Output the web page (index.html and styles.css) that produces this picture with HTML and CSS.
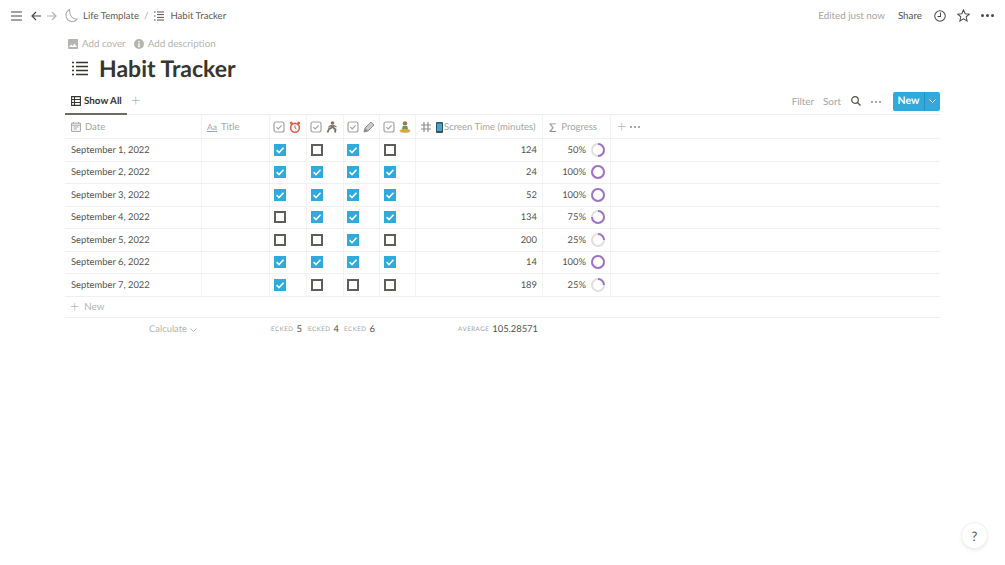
FILE: index.html
```html
<!DOCTYPE html>
<html>
<head>
<meta charset="utf-8">
<title>Habit Tracker</title>
<link rel="stylesheet" href="styles.css">
</head>
<body>
<svg class="defs" width="0" height="0">
	<symbol id="tick" viewBox="0 0 12 12"><path d="M2.6 6.2 5 8.5 9.5 3.8" fill="none" stroke="#fff" stroke-width="1.6"/></symbol>
	<symbol id="checkhead" viewBox="0 0 12 12"><rect x="1" y="1" width="10" height="10" rx="2" fill="none" stroke="#a5a4a1" stroke-width="1.2"/><path d="M3.4 6.1 5.3 7.9 8.6 4.4" fill="none" stroke="#a5a4a1" stroke-width="1.2"/></symbol>
</svg>

<div class="topbar">
	<svg class="ico menu" width="11" height="10" viewBox="0 0 11 10"><path d="M0 1h11M0 5h11M0 9h11" stroke="#4a4945" stroke-width="1.2"/></svg>
	<svg class="ico back" width="10" height="10" viewBox="0 0 10 10"><path d="M10 5H1M5 1 1 5l4 4" fill="none" stroke="#4a4945" stroke-width="1.2"/></svg>
	<svg class="ico forward" width="10" height="10" viewBox="0 0 10 10"><path d="M0 5h9M5 1l4 4-4 4" fill="none" stroke="#b5b4b1" stroke-width="1.2"/></svg>
	<svg class="ico moon" width="13" height="15" viewBox="0 0 14 15"><path d="M5 1C2.400 2.500 1 4.700 1 7.300 1 11 3.900 14 7.500 14c2.400 0 4.300-.8 5.500-2.500-4.800.4-8.400-4-8-10.500Z" fill="none" stroke="#a9a8a5" stroke-width="1.100"/></svg>
	<span class="crumb">Life Template</span>
	<span class="slash">/</span>
	<svg class="ico crumbicon" width="10" height="10" viewBox="0 0 10 10"><path d="M0 1h1.500M0 5h1.500M0 9h1.500M3 1h7M3 3.600h7M3 6.400h7M3 9h7" stroke="#55534e" stroke-width="1"/></svg>
	<span class="crumb">Habit Tracker</span>
	<span class="edited">Edited just now</span>
	<span class="share">Share</span>
	<svg class="ico clock" width="12" height="12" viewBox="0 0 13 13"><circle cx="6.500" cy="6.500" r="5.700" fill="none" stroke="#4a4945" stroke-width="1.100"/><path d="M7 2.800V7H3.800" fill="none" stroke="#4a4945" stroke-width="1.100"/></svg>
	<svg class="ico star" width="13" height="13" viewBox="0 0 14 14"><path d="M7 1 8.800 5.100l4.400.4-3.300 2.900 1 4.400L7 10.500l-3.900 2.300 1-4.400L.8 5.500l4.400-.4Z" fill="none" stroke="#4a4945" stroke-width="1.100"/></svg>
	<span class="dots dark"><i></i><i></i><i></i></span>
</div>

<div class="page">
	<div class="addrow">
		<span class="addbtn"><svg width="10" height="10" viewBox="0 0 10 10"><path d="M0 1a1 1 0 0 1 1-1h8a1 1 0 0 1 1 1v8a1 1 0 0 1-1 1H1a1 1 0 0 1-1-1Zm1 7h8L6.500 4.500 4.700 7 3.200 5.500Z" fill="#b5b4b1" fill-rule="evenodd"/></svg>Add cover</span>
		<span class="addbtn"><svg width="10" height="10" viewBox="0 0 10 10"><path d="M5 0a5 5 0 1 1 0 10A5 5 0 0 1 5 0ZM4.300 4.200v4h1.400v-4Zm0-2.300v1.400h1.400V1.900Z" fill="#b5b4b1" fill-rule="evenodd"/></svg>Add description</span>
	</div>
	<div class="titlerow">
		<svg width="16" height="15" viewBox="0 0 16 15"><path d="M0 1.500h2M0 5.500h2M0 9.500h2M0 13.500h2M4 1.500h12M4 5.500h12M4 9.500h12M4 13.500h12" stroke="#37352f" stroke-width="1.600"/></svg>
		<h1>Habit Tracker</h1>
	</div>

	<div class="viewbar">
		<div class="tab">
			<svg width="10" height="10" viewBox="0 0 10 10"><path d="M.6.600h8.800v8.800H.6ZM.6 3.500h8.800M.6 6.500h8.800M3.500.6v8.800" fill="none" stroke="#37352f" stroke-width="1.100"/></svg>
			Show All
		</div>
		<span class="plus">+</span>
		<div class="tools">
			<span>Filter</span>
			<span>Sort</span>
			<svg width="10" height="10" viewBox="0 0 10 10"><circle cx="4" cy="4" r="3.300" fill="none" stroke="#55534e" stroke-width="1.200"/><path d="m6.500 6.500 3 3" stroke="#55534e" stroke-width="1.300"/></svg>
			<span class="dots"><i></i><i></i><i></i></span>
			<div class="newbtn"><b>New</b><em><svg width="7" height="4" viewBox="0 0 7 4"><path d="m.5.500 3 3 3-3" fill="none" stroke="#fff" stroke-width="1"/></svg></em></div>
		</div>
	</div>

	<div class="row head">
		<div class="cell"><svg width="10" height="10" viewBox="0 0 10 10"><path d="M.6 1.200h8.800v8.200H.6ZM.6 3.200h8.800M2.500 5h5M2.500 7h3.500M2.500 0v1.200M7.500 0v1.200" fill="none" stroke="#a5a4a1" stroke-width="1"/></svg>Date</div>
		<div class="cell"><span class="aa">Aa</span>Title</div>
		<div class="cell"><svg class="chk" width="12" height="12"><use href="#checkhead"/></svg>
			<svg class="emoji" width="12" height="12" viewBox="0 0 12 12"><circle cx="6" cy="6.800" r="4.400" fill="#fff" stroke="#e0604c" stroke-width="1.600"/><circle cx="2.300" cy="2" r="1.500" fill="#e0604c"/><circle cx="9.700" cy="2" r="1.500" fill="#e0604c"/><path d="M6 4.500v2.500l1.500 1" fill="none" stroke="#555" stroke-width=".8"/></svg></div>
		<div class="cell"><svg class="chk" width="12" height="12"><use href="#checkhead"/></svg>
			<svg class="emoji" width="12" height="12" viewBox="0 0 12 12"><circle cx="6.500" cy="2" r="1.800" fill="#a26a45"/><path d="M4.200 4h3.800l.5 3.200H4.700Z" fill="#6c7a9c"/><path d="M5.500 7 3 8 1.500 11.500M7.500 7l2 1.500-.5 3" fill="none" stroke="#7a6a62" stroke-width="1.800"/><path d="M4.500 4.500 2.500 6.500M8 4.500 10.500 6" stroke="#a26a45" stroke-width="1.200"/></svg></div>
		<div class="cell"><svg class="chk" width="12" height="12"><use href="#checkhead"/></svg>
			<svg class="emoji" width="12" height="12" viewBox="0 0 12 12"><path d="M1 11 2 7 8 1l3 3-6 6Z" fill="#c9c9c7" stroke="#7d7d7b" stroke-width=".8"/><path d="m1 11 1-4 3 3Z" fill="#8b8b89"/></svg></div>
		<div class="cell"><svg class="chk" width="12" height="12"><use href="#checkhead"/></svg>
			<svg class="emoji" width="12" height="12" viewBox="0 0 12 12"><circle cx="6" cy="2.400" r="2.200" fill="#a8763f"/><path d="M3.800 5h4.400l1 3.500H2.800Z" fill="#5c9a76"/><ellipse cx="6" cy="9.800" rx="5.500" ry="2" fill="#d9a93d"/></svg></div>
		<div class="cell">
			<svg class="hash" width="10" height="10" viewBox="0 0 10 10"><path d="M3 0v10M7 0v10M0 3h10M0 7h10" stroke="#8f8e8b" stroke-width="1.200"/></svg>
			<svg class="phone" width="7" height="11" viewBox="0 0 7 11"><rect width="7" height="11" rx="1" fill="#3d4f58"/><rect x="1" y="1.500" width="5" height="7.500" fill="#3aa8d8"/></svg>Screen Time (minutes)</div>
		<div class="cell"><span class="sigma">Σ</span>Progress</div>
		<div class="cell last"><span class="plus">+</span><span class="dots"><i></i><i></i><i></i></span></div>
	</div>

	<div class="row"><div class="cell">September 1, 2022</div><div class="cell"></div>
		<div class="cell box"><span class="cb on"><svg width="12" height="12"><use href="#tick"/></svg></span></div>
		<div class="cell box"><span class="cb"></span></div>
		<div class="cell box"><span class="cb on"><svg width="12" height="12"><use href="#tick"/></svg></span></div>
		<div class="cell box"><span class="cb"></span></div>
		<div class="cell num">124</div>
		<div class="cell prog">50%<svg class="ring" width="14" height="14" viewBox="0 0 14 14"><circle class="track" cx="7" cy="7" r="6"/><circle class="arc" cx="7" cy="7" r="6" pathLength="100" stroke-dasharray="50 100"/></svg></div>
		<div class="cell last"></div></div>

	<div class="row"><div class="cell">September 2, 2022</div><div class="cell"></div>
		<div class="cell box"><span class="cb on"><svg width="12" height="12"><use href="#tick"/></svg></span></div>
		<div class="cell box"><span class="cb on"><svg width="12" height="12"><use href="#tick"/></svg></span></div>
		<div class="cell box"><span class="cb on"><svg width="12" height="12"><use href="#tick"/></svg></span></div>
		<div class="cell box"><span class="cb on"><svg width="12" height="12"><use href="#tick"/></svg></span></div>
		<div class="cell num">24</div>
		<div class="cell prog">100%<svg class="ring" width="14" height="14" viewBox="0 0 14 14"><circle class="track" cx="7" cy="7" r="6"/><circle class="arc" cx="7" cy="7" r="6" pathLength="100" stroke-dasharray="100 100"/></svg></div>
		<div class="cell last"></div></div>

	<div class="row"><div class="cell">September 3, 2022</div><div class="cell"></div>
		<div class="cell box"><span class="cb on"><svg width="12" height="12"><use href="#tick"/></svg></span></div>
		<div class="cell box"><span class="cb on"><svg width="12" height="12"><use href="#tick"/></svg></span></div>
		<div class="cell box"><span class="cb on"><svg width="12" height="12"><use href="#tick"/></svg></span></div>
		<div class="cell box"><span class="cb on"><svg width="12" height="12"><use href="#tick"/></svg></span></div>
		<div class="cell num">52</div>
		<div class="cell prog">100%<svg class="ring" width="14" height="14" viewBox="0 0 14 14"><circle class="track" cx="7" cy="7" r="6"/><circle class="arc" cx="7" cy="7" r="6" pathLength="100" stroke-dasharray="100 100"/></svg></div>
		<div class="cell last"></div></div>

	<div class="row"><div class="cell">September 4, 2022</div><div class="cell"></div>
		<div class="cell box"><span class="cb"></span></div>
		<div class="cell box"><span class="cb on"><svg width="12" height="12"><use href="#tick"/></svg></span></div>
		<div class="cell box"><span class="cb on"><svg width="12" height="12"><use href="#tick"/></svg></span></div>
		<div class="cell box"><span class="cb on"><svg width="12" height="12"><use href="#tick"/></svg></span></div>
		<div class="cell num">134</div>
		<div class="cell prog">75%<svg class="ring" width="14" height="14" viewBox="0 0 14 14"><circle class="track" cx="7" cy="7" r="6"/><circle class="arc" cx="7" cy="7" r="6" pathLength="100" stroke-dasharray="75 100"/></svg></div>
		<div class="cell last"></div></div>

	<div class="row"><div class="cell">September 5, 2022</div><div class="cell"></div>
		<div class="cell box"><span class="cb"></span></div>
		<div class="cell box"><span class="cb"></span></div>
		<div class="cell box"><span class="cb on"><svg width="12" height="12"><use href="#tick"/></svg></span></div>
		<div class="cell box"><span class="cb"></span></div>
		<div class="cell num">200</div>
		<div class="cell prog">25%<svg class="ring" width="14" height="14" viewBox="0 0 14 14"><circle class="track" cx="7" cy="7" r="6"/><circle class="arc" cx="7" cy="7" r="6" pathLength="100" stroke-dasharray="25 100"/></svg></div>
		<div class="cell last"></div></div>

	<div class="row"><div class="cell">September 6, 2022</div><div class="cell"></div>
		<div class="cell box"><span class="cb on"><svg width="12" height="12"><use href="#tick"/></svg></span></div>
		<div class="cell box"><span class="cb on"><svg width="12" height="12"><use href="#tick"/></svg></span></div>
		<div class="cell box"><span class="cb on"><svg width="12" height="12"><use href="#tick"/></svg></span></div>
		<div class="cell box"><span class="cb on"><svg width="12" height="12"><use href="#tick"/></svg></span></div>
		<div class="cell num">14</div>
		<div class="cell prog">100%<svg class="ring" width="14" height="14" viewBox="0 0 14 14"><circle class="track" cx="7" cy="7" r="6"/><circle class="arc" cx="7" cy="7" r="6" pathLength="100" stroke-dasharray="100 100"/></svg></div>
		<div class="cell last"></div></div>

	<div class="row"><div class="cell">September 7, 2022</div><div class="cell"></div>
		<div class="cell box"><span class="cb on"><svg width="12" height="12"><use href="#tick"/></svg></span></div>
		<div class="cell box"><span class="cb"></span></div>
		<div class="cell box"><span class="cb"></span></div>
		<div class="cell box"><span class="cb"></span></div>
		<div class="cell num">189</div>
		<div class="cell prog">25%<svg class="ring" width="14" height="14" viewBox="0 0 14 14"><circle class="track" cx="7" cy="7" r="6"/><circle class="arc" cx="7" cy="7" r="6" pathLength="100" stroke-dasharray="25 100"/></svg></div>
		<div class="cell last"></div></div>

	<div class="newrow"><span class="plus">+</span>New</div>

	<div class="row calc">
		<div class="cell calcbtn">Calculate <svg width="7" height="4" viewBox="0 0 7 4"><path d="m.5.500 3 3 3-3" fill="none" stroke="#b5b4b1" stroke-width="1"/></svg></div>
		<div class="cell"></div>
		<div class="cell sum"><small>CHECKED</small>5</div>
		<div class="cell sum"><small>CHECKED</small>4</div>
		<div class="cell sum"><small>CHECKED</small>6</div>
		<div class="cell"></div>
		<div class="cell sum"><small>AVERAGE</small>105.28571</div>
		<div class="cell"></div>
		<div class="cell"></div>
	</div>
</div>

<div class="help">?</div>
</body>
</html>
```

FILE: styles.css
```css
*{ margin:0; padding:0; box-sizing:border-box;}
body{ font-family:Lato,"Open Sans",sans-serif; color:#55534e; background:#fff; width:1005px; height:565px; overflow:hidden; position:relative; font-size:9.800px; text-rendering:geometricPrecision;}
.defs{ position:absolute;}
svg{ display:block; flex:none;}

.topbar{ height:31px; display:flex; align-items:center; padding:0 11px 0 11px;}
.menu{ margin-right:9px;}
.back{ margin-right:6px;}
.forward{ margin-right:8px;}
.moon{ margin-right:5px;}
.slash{ margin:0 6px 0 5px; color:#a5a4a1;}
.crumbicon{ margin-right:6px;}
.crumb{ color:#5d5b56; font-size:9.600px; padding-top:1px;}
.edited{ margin-left:auto; color:#a5a4a1; margin-right:13px; padding-top:1px;}
.share{ color:#55534e; margin-right:12px; padding-top:1px;}
.clock{ margin-right:11px;}
.star{ margin-right:11px;}

.dots{ display:inline-flex; gap:2px; align-items:center;}
.dots i{ width:2px; height:2px; border-radius:50%; background:#8f8e8b;}
.dots.dark i{ width:3px; height:3px; background:#4a4945;}

.page{ margin:0 65px; }
.addrow{ display:flex; gap:8px; height:24px; align-items:center; padding:1px 3px 0; color:#b5b4b1;}
.addbtn{ display:flex; align-items:center; gap:4px;}
.titlerow{ display:flex; align-items:center; gap:11px; height:26px; padding-left:7px;}
h1{ font-size:23px; font-weight:700; color:#37352f; line-height:26px;}

.viewbar{ display:flex; align-items:center; height:29px; margin-top:5px; border-bottom:1px solid #eeeeed; padding-top:2px;}
.tab{ display:flex; align-items:center; gap:3px; height:27px; width:62px; padding:1px 0 0 6px; color:#37352f; font-weight:700; border-bottom:2px solid #6b6a66; margin-bottom:-1px;}
.plus{ font-size:16px; line-height:14px; color:#b5b4b1; font-weight:300;}
.viewbar > .plus{ margin-left:4px;}
.tools{ margin-left:auto; display:flex; align-items:center; gap:10px; color:#a5a4a1;}
.tools span{ padding-top:1px;}
.tools span:first-child{ margin-right:-1px;}
.newbtn{ display:flex; height:19px; width:47px; margin-left:2px; background:#2eaadc; border-radius:2px; color:#fff;}
.newbtn b{ width:31px; text-align:center; line-height:19px; font-size:10.500px; font-weight:700;}
.newbtn em{ flex:1; display:flex; align-items:center; justify-content:center; border-left:1px solid #2492c0;}

.row{ display:grid; grid-template-columns:137px 68px 37px 37px 36px 36px 127px 68px 1fr; height:22.500px; border-bottom:1px solid #f0f0ef; color:#55534e; font-size:9.400px;}
.cell{ display:flex; align-items:center; padding:1px 6px 0; border-right:1px solid #f3f3f2; white-space:nowrap; overflow:hidden;}
.cell.last{ border-right:0; gap:12px;}
.head{ height:24px; color:#a5a4a1; font-size:9.500px;}
.head .cell{ gap:4px;}
.head .cell:nth-child(n+3):nth-child(-n+6){ padding:1px 3px 0; gap:3.500px;}
.head .cell:nth-child(2){ padding-left:5px; gap:3px;}
.head .cell:nth-child(7){ padding:1px 5px 0 5px; gap:0;}
.hash{ margin-right:5px;}
.phone{ margin-right:1px;}
.aa{ font-size:8.500px; text-decoration:underline; margin-right:1px;}
.sigma{ font-size:12px; color:#8f8e8b; margin-right:1px;}
.box{ justify-content:flex-start; padding:0 0 0 4px;}
.row .box:nth-child(5){ padding-left:3px;}
.cb{ width:12px; height:12px; border:2px solid #5f5e5a; display:block;}
.cb.on{ border:0; background:#2eaadc;}
.num{ justify-content:flex-end; padding-right:5px;}
.prog{ justify-content:flex-end; padding-right:5px; gap:5px;}
.ring{ margin-top:-1px;}
.ring circle{ fill:none; stroke-width:2;}
.track{ stroke:#e0e0df;}
.arc{ stroke:#9f74c8; transform:rotate(-90deg); transform-origin:7px 7px;}

.newrow{ height:21px; display:flex; align-items:center; gap:5px; padding-left:5px; color:#b5b4b1; border-bottom:1px solid #eeeeed;}
.calc{ border-bottom:0; height:23px;}
.calc .cell{ border-right:0;}
.calcbtn{ color:#b5b4b1; gap:3px; justify-content:flex-end; padding-right:5px;}
.sum{ justify-content:flex-end; gap:3px; padding-right:5px;}
.sum small{ font-size:6.200px; letter-spacing:.5px; color:#a5a4a1;}

.help{ position:absolute; right:18px; bottom:17px; width:25px; height:25px; border-radius:50%; background:#fff; box-shadow:0 0 0 1px #f0f0ef,0 2px 4px rgba(0,0,0,.1); display:flex; align-items:center; justify-content:center; font-size:13px; color:#55534e;}
```
